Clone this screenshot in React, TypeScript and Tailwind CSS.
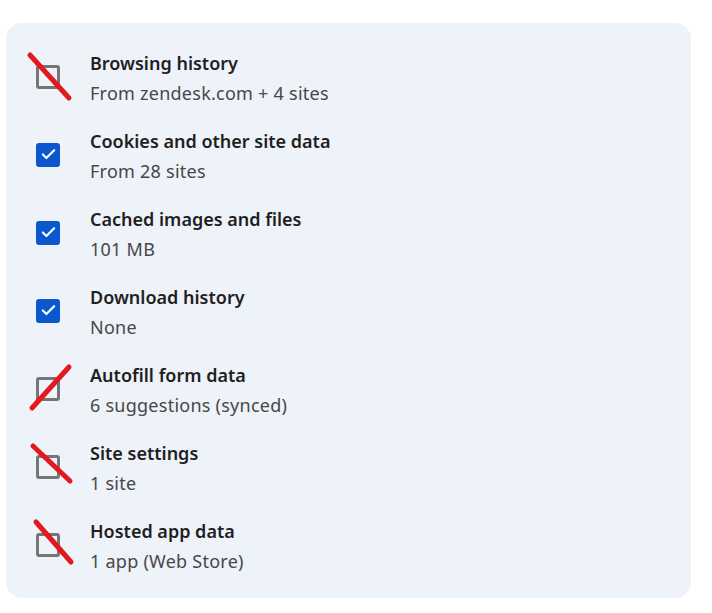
import { Check } from 'lucide-react';

type Item = {
  title: string;
  detail: string;
  checked: boolean;
  // red strike drawn over the box, coords relative to the 24px box
  strike?: [number, number, number, number];
};

const items: Item[] = [
  { title: 'Browsing history', detail: 'From zendesk.com + 4 sites', checked: false, strike: [-6, -10, 33, 33] },
  { title: 'Cookies and other site data', detail: 'From 28 sites', checked: true },
  { title: 'Cached images and files', detail: '101 MB', checked: true },
  { title: 'Download history', detail: 'None', checked: true },
  { title: 'Autofill form data', detail: '6 suggestions (synced)', checked: false, strike: [33, -10, -4, 31] },
  { title: 'Site settings', detail: '1 site', checked: false, strike: [-3, -9, 34, 26] },
  { title: 'Hosted app data', detail: '1 app (Web Store)', checked: false, strike: [0, -11, 35, 29] },
];

function Box({ item }: { item: Item }) {
  return (
    <div className="relative w-6 h-6 shrink-0 mb-[3px]">
      {item.checked ? (
        <div className="w-6 h-6 rounded-[3px] bg-[#0b57d0] flex items-center justify-center">
          <Check size={17} strokeWidth={3} className="text-white" />
        </div>
      ) : (
        <div className="w-6 h-6 rounded-[3px] border-[3px] border-[#757575]" />
      )}
      {item.strike && (
        <svg className="absolute -left-3 -top-3 overflow-visible" width="48" height="48">
          <line
            x1={item.strike[0] + 12}
            y1={item.strike[1] + 12}
            x2={item.strike[2] + 12}
            y2={item.strike[3] + 12}
            stroke="#e3191f"
            strokeWidth="5"
            strokeLinecap="round"
          />
        </svg>
      )}
    </div>
  );
}

export default function App() {
  return (
    <div className="w-[712px] h-[613px] bg-white pt-[23px] pl-[6px]" style={{ fontFamily: '"Segoe UI", "Noto Sans", sans-serif' }}>
      <div className="w-[685px] h-[575px] rounded-2xl bg-[#eef2f9] pt-4 px-[30px]">
        {items.map((item) => (
          <div key={item.title} className="flex items-center gap-[30px] py-[9px]">
            <Box item={item} />
            <div className="flex flex-col">
              <span className="text-[18px] leading-[30px] font-semibold text-[#1f1f1f]">{item.title}</span>
              <span className="text-[18px] leading-[30px] tracking-[0.25px] text-[#474747]">{item.detail}</span>
            </div>
          </div>
        ))}
      </div>
    </div>
  );
}
